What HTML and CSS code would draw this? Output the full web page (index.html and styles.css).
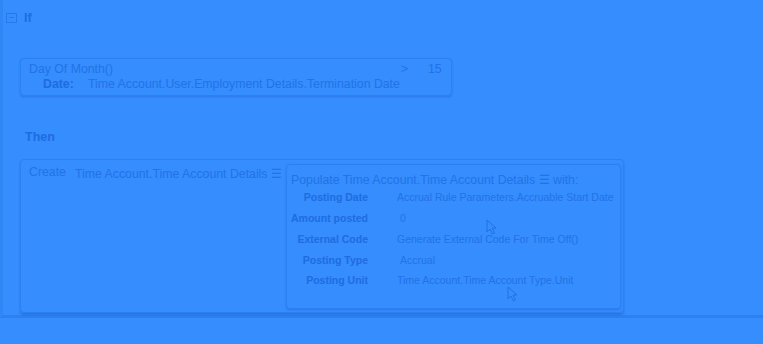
FILE: index.html
```html
<!DOCTYPE html>
<html lang="en">
<head>
  <meta charset="UTF-8">
  <meta name="viewport" content="width=device-width, initial-scale=1.0">
  <title>Rule</title>
  <link rel="stylesheet" href="styles.css">
</head>
<body>
  <div class="rule">
    <div class="if-head">
      <span class="toggle"></span>
      <span class="head-text">If</span>
    </div>

    <div class="cond-box">
      <div class="cond-row">
        <span class="func">Day Of Month()</span>
        <span class="op">&gt;</span>
        <span class="num">15</span>
      </div>
      <div class="param-row">
        <span class="param-label">Date:</span>
        <span class="param-value">Time Account.User.Employment Details.Termination Date</span>
      </div>
    </div>

    <div class="then-head">Then</div>

    <div class="action-box">
      <span class="create">Create</span>
      <span class="target">Time Account.Time Account Details &#9776;</span>
      <div class="populate">
        <div class="populate-title">Populate Time Account.Time Account Details &#9776; with:</div>
        <div class="fields">
          <span class="f-label">Posting Date</span>
          <span class="f-value">Accrual Rule Parameters.Accruable Start Date</span>
          <span class="f-label">Amount posted</span>
          <span class="f-value pad">0</span>
          <span class="f-label">External Code</span>
          <span class="f-value">Generate External Code For Time Off()</span>
          <span class="f-label">Posting Type</span>
          <span class="f-value pad">Accrual</span>
          <span class="f-label">Posting Unit</span>
          <span class="f-value">Time Account.Time Account Type.Unit</span>
        </div>
      </div>
    </div>
  </div>

  <svg class="cursor cursor-one" width="12" height="16" viewBox="0 0 12 16">
    <path d="M1 1 L1 13 L4 10 L6.5 15 L8.5 14 L6 9 L10 9 Z" fill="none" stroke="#2270e4" stroke-width="1"/>
  </svg>
  <svg class="cursor cursor-two" width="12" height="16" viewBox="0 0 12 16">
    <path d="M1 1 L1 13 L4 10 L6.5 15 L8.5 14 L6 9 L10 9 Z" fill="none" stroke="#2270e4" stroke-width="1"/>
  </svg>
</body>
</html>
```

FILE: styles.css
```css
*,*::before,*::after{
  margin: 0;
  padding: 0;
  box-sizing: border-box;
}
body{
  width: 763px;
  height: 344px;
  overflow: hidden;
  background: #358dfe;
  font-family: "Liberation Sans", Arial, sans-serif;
  color: #2372e6;
  position: relative;
}

.rule{
  height: 318px;
  border-left: 3px solid #2f86f5;
  border-bottom: 3px solid #2d80ee;
  padding-top: 11px;
}
.if-head{
  display: flex;
  align-items: center;
  gap: 7px;
  height: 13px;
  padding-left: 3px;
}
.toggle{
  width: 11px;
  height: 10px;
  border: 1px solid #2a78e8;
  position: relative;
}
.toggle::after{
  content: "";
  position: absolute;
  left: 2px;
  right: 2px;
  top: 3px;
  height: 1px;
  background: #2a78e8;
}
.head-text{
  font-weight: 700;
  font-size: 12.5px;
  color: #1f6ce0;
}

.cond-box{
  margin: 34px 0 0 17px;
  width: 432px;
  border: 1px solid #2c80ef;
  border-radius: 4px;
  padding: 3px 8px 3px;
  box-shadow: 0 1px 2px rgba(20,80,190,.35);
  font-size: 12.3px;
  line-height: 15px;
  white-space: nowrap;
}
.cond-row{
  display: flex;
}
.cond-row .func{
  flex: 1;
}
.cond-row .op{
  width: 27px;
}
.cond-row .num{
  width: 15px;
}
.param-row{
  display: flex;
  padding-left: 14px;
}
.param-label{
  width: 45px;
  font-weight: 700;
  color: #1f6ce0;
}

.then-head{
  margin: 34px 0 0 22px;
  font-size: 12.5px;
  font-weight: 700;
  color: #1f6ce0;
  line-height: 14px;
}

.action-box{
  margin: 15px 0 0 17px;
  width: 604px;
  height: 154px;
  border: 1px solid #2c80ef;
  border-radius: 4px;
  box-shadow: 0 2px 2px rgba(20,80,190,.4);
  display: flex;
  align-items: flex-start;
  padding: 4px 2px 3px 8px;
  white-space: nowrap;
}
.create{
  font-size: 12.3px;
  line-height: 14px;
  width: 46px;
  margin-top: 1px;
}
.target{
  font-size: 12.3px;
  line-height: 16px;
  margin-top: 2px;
  width: 211px;
}
.populate{
  width: 335px;
  height: 145px;
  border: 1px solid #2c80ef;
  border-radius: 4px;
  box-shadow: 0 1px 2px rgba(20,80,190,.35);
  padding: 7px 0 0 4px;
}
.populate-title{
  font-size: 12.3px;
  line-height: 16px;
}
.fields{
  display: grid;
  grid-template-columns: 77px auto;
  column-gap: 29px;
  grid-auto-rows: 20.75px;
  align-items: center;
  margin-top: -1px;
  font-size: 10.5px;
}
.f-label{
  text-align: right;
  font-weight: 700;
  color: #1f6ce0;
}
.f-value.pad{
  padding-left: 3px;
}

.cursor{
  position: absolute;
}
.cursor-one{
  left: 486px;
  top: 219px;
}
.cursor-two{
  left: 507px;
  top: 286px;
}
```
